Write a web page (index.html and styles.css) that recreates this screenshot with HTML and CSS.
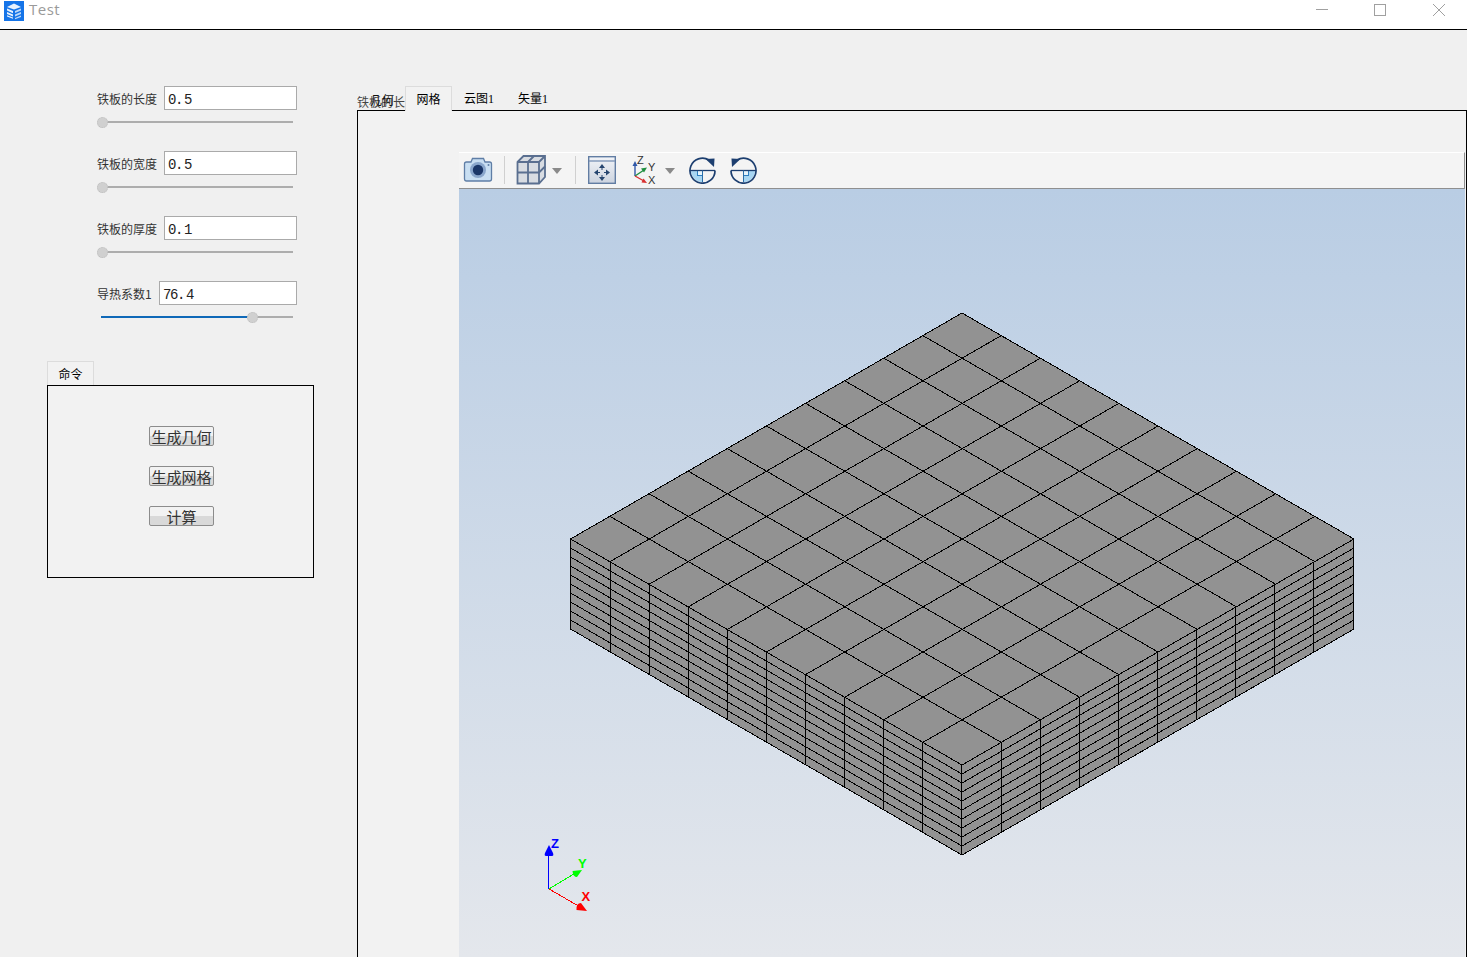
FILE: index.html
```html
<!DOCTYPE html>
<html lang="zh">
<head>
<meta charset="utf-8">
<title>Test</title>
<link rel="stylesheet" href="styles.css">
</head>
<body>
<div class="window">
  <header class="titlebar">
    <svg class="app-icon" viewBox="0 0 20 20" width="20" height="20">
      <rect width="20" height="20" fill="#1574e8"/>
      <path d="M3 6 10 2.500 17 6 10 8.500Z" fill="#e8f2fd"/>
      <path d="M3 7.500 9 10v2.200L3 9.600ZM3 11l6 2.400v2.200L3 13ZM3 14.200l6 2.400v1.200L3 15.400Z" fill="#e8f2fd"/>
      <path d="M11 10l6-2.500v2L11 12ZM11 13.500l6-2.500v2l-6 2.500ZM11 17l6-2.500v1.400L11 18.200Z" fill="#bcd8f8"/>
    </svg>
    <span class="app-title">Test</span>
    <div class="win-controls">
      <svg class="win-btn" viewBox="0 0 12 12" width="12" height="12"><path d="M0 5.500H12" stroke="#a0a0a0" fill="none"/></svg>
      <svg class="win-btn win-btn-max" viewBox="0 0 12 12" width="12" height="12"><rect x=".5" y=".5" width="11" height="11" stroke="#a0a0a0" fill="none"/></svg>
      <svg class="win-btn" viewBox="0 0 12 12" width="12" height="12"><path d="M0 0 12 12M12 0 0 12" stroke="#a0a0a0" fill="none"/></svg>
    </div>
  </header>
  <main class="content">
    <aside class="left">
      <div class="params">
        <div class="param">
          <div class="param-row"><label class="param-label">铁板的长度</label><input class="param-input" value="0. 5"></div>
          <div class="slider"><span class="knob knob-start"></span></div>
        </div>
        <div class="param">
          <div class="param-row"><label class="param-label">铁板的宽度</label><input class="param-input" value="0. 5"></div>
          <div class="slider"><span class="knob knob-start"></span></div>
        </div>
        <div class="param">
          <div class="param-row"><label class="param-label">铁板的厚度</label><input class="param-input" value="0. 1"></div>
          <div class="slider"><span class="knob knob-start"></span></div>
        </div>
        <div class="param">
          <div class="param-row param-row-wide"><label class="param-label">导热系数1</label><input class="param-input param-input-wide" value="76. 4"></div>
          <div class="slider slider-filled"><span class="fill"></span><span class="knob knob-end"></span></div>
        </div>
      </div>
      <section class="commands">
        <div class="tab tab-cmd">命令</div>
        <div class="cmd-panel">
          <button class="cmd-btn">生成几何</button>
          <button class="cmd-btn">生成网格</button>
          <button class="cmd-btn">计算</button>
        </div>
      </section>
    </aside>
    <section class="right">
      <div class="tabs">
        <span class="tab-under">铁板的长</span>
        <span class="tab-over">几何</span>
        <span class="tab tab-active">网格</span>
        <span class="tab-plain tab-cloud">云图1</span>
        <span class="tab-plain">矢量1</span>
      </div>
      <div class="tab-panel">
        <div class="viewer">
          <div class="toolbar">
            <svg class="tool tool-cam" width="30" height="26" viewBox="0 0 30 26">
              <path d="M3.500 5H8l1.500-3.500h11L22 5h4.500q2 0 2 2v15q0 2-2 2h-23q-2 0-2-2V7q0-2 2-2Z" fill="#c9dff2" stroke="#5f7ea6" stroke-width="1.300"/>
              <circle cx="15" cy="13" r="8" fill="#8aa7cc"/>
              <circle cx="15" cy="13" r="5.200" fill="#1b3768"/>
              <circle cx="25.500" cy="8" r="1" fill="#5f7ea6"/>
            </svg>
            <span class="sep"></span>
            <svg class="tool tool-cube" width="30" height="30" viewBox="0 0 30 30">
              <path d="M1.500 7 7.500 1H29V22l-6 6.500H1.500Z" fill="#d8dce2"/>
              <path d="M1.500 7 7.500 1H29V22l-6 6.500H1.500ZM1.500 7H23V28.500M23 7 29 1" fill="none" stroke="#5a6f90" stroke-width="1.800"/>
              <path d="M12 7V28.500M1.500 17.500H23M23 17.500 29 11.500M12 7 18 1" fill="none" stroke="#5a6f90" stroke-width="1.800"/>
            </svg>
            <svg class="tool tool-caret" width="10" height="6" viewBox="0 0 10 6"><path d="M0 0H10L5 6Z" fill="#8a8a8a"/></svg>
            <span class="sep sep-2"></span>
            <svg class="tool tool-fit" width="28" height="28" viewBox="0 0 28 28">
              <defs><linearGradient id="fitbg" x1="0" y1="0" x2="0" y2="1"><stop offset="0" stop-color="#f2f4f8"/><stop offset="1" stop-color="#ccd3df"/></linearGradient></defs>
              <rect x=".7" y=".7" width="26.600" height="26.600" fill="url(#fitbg)" stroke="#627da3" stroke-width="1.400"/>
              <path d="M1 5H27" stroke="#7f96b8" stroke-width="1.400"/>
              <path d="M14 8 11 12h6ZM14 25 11 21h6ZM6 16.500l4-3v6ZM22 16.500l-4-3v6Z" fill="#26456f"/>
              <path d="M14 12v2M14 19v2M10 16.500h2M16 16.500h2" stroke="#26456f"/>
            </svg>
            <svg class="tool tool-axes" width="30" height="32" viewBox="0 0 30 32">
              <path d="M4 22V10" stroke="#3158a8" stroke-width="1.400"/>
              <path d="M4 7 1.500 12h5Z" fill="#3158a8"/>
              <path d="M4 22 13 16" stroke="#1f8f3f" stroke-width="1.400"/>
              <path d="M16 13.500 10 14.500 13 18.500Z" fill="#1f8f3f"/>
              <path d="M4 22 13 27" stroke="#d83030" stroke-width="1.400"/>
              <path d="M16 29 10.500 28.500 12.500 24.500Z" fill="#d83030"/>
              <text class="axis-label" x="6" y="9.500">Z</text>
              <text class="axis-label" x="17" y="17">Y</text>
              <text class="axis-label" x="17" y="30">X</text>
            </svg>
            <svg class="tool tool-caret tool-caret-2" width="10" height="6" viewBox="0 0 10 6"><path d="M0 0H10L5 6Z" fill="#8a8a8a"/></svg>
            <svg class="tool tool-rot" width="27" height="27" viewBox="0 0 27 27">
              <path d="M13.500 13.500H2A11.500 11.500 0 0 0 13.500 25Z" fill="#a8d6f2"/>
              <rect x="8.500" y="13.500" width="5" height="5" fill="#e6f4fc" stroke="#2f7fc0"/>
              <path d="M1 13.500H26" stroke="#1d3f70" stroke-width="1.300"/>
              <path d="M13.500 13.500V25" stroke="#2b6ea8"/>
              <path d="M20 3A12.500 12.500 0 1 0 26 13.500" fill="none" stroke="#1d3f70" stroke-width="1.700"/>
              <path d="M16.500 2 25.500 1.500 25 10Z" fill="#1d3f70"/>
            </svg>
            <svg class="tool tool-rot tool-rot-2" width="27" height="27" viewBox="0 0 27 27">
              <path d="M13.500 13.500H25A11.500 11.500 0 0 1 13.500 25Z" fill="#a8d6f2"/>
              <rect x="13.500" y="13.500" width="5" height="5" fill="#e6f4fc" stroke="#2f7fc0"/>
              <path d="M1 13.500H26" stroke="#1d3f70" stroke-width="1.300"/>
              <path d="M13.500 13.500V25" stroke="#2b6ea8"/>
              <path d="M7 3A12.500 12.500 0 1 1 1 13.500" fill="none" stroke="#1d3f70" stroke-width="1.700"/>
              <path d="M10.500 2 1.500 1.500 2 10Z" fill="#1d3f70"/>
            </svg>
          </div>
          <div class="scene">
            <svg class="mesh" viewBox="459 189 1006 768" width="1006" height="768">
              <path d="M962 313 1354 539V629L962 855 570.500 629V539Z" fill="#929292" stroke="none"/>
              <path class="mesh-lines" d="M570.500 539 962 765M610.100 516.400 1001.200 742.400M649.200 493.800 1040.400 719.800M688.300 471.200 1079.600 697.200M727.400 448.600 1118.800 674.600M766.500 426 1158 652M805.600 403.400 1197.200 629.400M844.700 380.800 1236.400 606.800M883.800 358.200 1275.600 584.200M922.900 335.600 1314.800 561.600M962 313 1354 539M570.500 539 962 313M610.100 561.600 1001.200 335.600M649.200 584.200 1040.400 358.200M688.300 606.800 1079.600 380.800M727.400 629.400 1118.800 403.400M766.500 652 1158 426M805.600 674.600 1197.200 448.600M844.700 697.200 1236.400 471.200M883.800 719.800 1275.600 493.800M922.900 742.400 1314.800 516.400M962 765 1354 539"/>
              <path class="mesh-lines" d="M570.500 548 962 774 1354 548M570.500 557 962 783 1354 557M570.500 566 962 792 1354 566M570.500 575 962 801 1354 575M570.500 584 962 810 1354 584M570.500 593 962 819 1354 593M570.500 602 962 828 1354 602M570.500 611 962 837 1354 611M570.500 620 962 846 1354 620M570.500 629 962 855 1354 629"/>
              <path class="mesh-lines" d="M570.500 539v90M610.500 561.600v90M649.500 584.200v90M688.500 606.800v90M727.500 629.400v90M766.500 652v90M805.500 674.600v90M844.500 697.200v90M883.500 719.800v90M922.500 742.400v90M961.500 765v90M1001.500 742.400v90M1040.500 719.800v90M1079.500 697.200v90M1118.500 674.600v90M1157.500 652v90M1196.500 629.400v90M1235.500 606.800v90M1274.500 584.200v90M1313.500 561.600v90M1353.500 539v90"/>
              <path d="M548.500 889V852" stroke="#0000ff" fill="none"/>
              <path d="M549 889 577 872" stroke="#00ff00" fill="none" shape-rendering="crispEdges"/>
              <path d="M549 889 582 908" stroke="#ff0000" fill="none" shape-rendering="crispEdges"/>
              <path d="M549 845l4 8q1 3-1 3h-6q-2 0-1-3Z" fill="#0000ff"/>
              <path d="M572.500 871 582 870 577 877Q573 877 572.500 871Z" fill="#00ff00"/>
              <path d="M576.500 910Q576 903 581 903L587 911Z" fill="#ff0000"/>
              <text class="gizmo-label gizmo-z" x="551" y="848">Z</text>
              <text class="gizmo-label gizmo-y" x="578" y="868">Y</text>
              <text class="gizmo-label gizmo-x" x="581.500" y="901">X</text>
            </svg>
          </div>
        </div>
      </div>
    </section>
  </main>
</div>
</body>
</html>
```

FILE: styles.css
```css
* { box-sizing: border-box; }
html, body { margin: 0; padding: 0; height: 100%; overflow: hidden; }
body { font-family: "Noto Sans CJK SC", "Liberation Sans", sans-serif; background: #f0f0f0; color: #000; }
.window { width: 1467px; height: 957px; display: flex; flex-direction: column; overflow: hidden; }

.titlebar { height: 30px; flex: none; background: #fff; border-bottom: 1px solid #000; display: flex; align-items: flex-start; padding: 1px 0 0 4px; }
.app-icon { flex: none; }
.app-title { margin: 0 0 0 5px; font: 15px/18px "Open Sans", "Liberation Sans", sans-serif; color: #9a9a9a; letter-spacing: .5px; transform: translateY(-1px); }
.win-controls { margin-left: auto; display: flex; gap: 46px; padding: 3px 22px 0 0; }
.win-btn { display: block; }
.win-btn-max { margin-right: 1px; }

.content { flex: 1; display: flex; min-height: 0; background: #f0f0f0; }
.left { width: 357px; flex: none; padding: 56px 0 0 47px; }
.params { display: flex; flex-direction: column; gap: 19px; padding-left: 50px; width: 250px; }
.param { height: 46px; display: flex; flex-direction: column; }
.param-row { display: flex; align-items: center; height: 24px; gap: 6px; }
.param-label { font-size: 12px; line-height: 24px; padding-top: 2px; color: #333; white-space: nowrap; width: 61px; }
.param-row-wide .param-label { width: 56px; }
.param-input { width: 133px; height: 24px; border: 1px solid #aaa; background: #fff; padding: 4px 3px 0; font: 14px/18px "Liberation Mono", monospace; letter-spacing: -1.400px; word-spacing: -5px; color: #222; outline: none; margin: 0; border-radius: 0; }
.param-input-wide { width: 138px; }
.slider { position: relative; width: 192px; height: 2px; background: #adadad; margin: 11px 0 0 4px; }
.knob { position: absolute; top: -4px; width: 11px; height: 11px; border-radius: 50%; background: #d0d0d0; border: 1px dotted #bdbdbd; }
.knob-start { left: -4px; }
.knob-end { left: 146px; }
.fill { position: absolute; left: 0; top: 0; height: 2px; width: 150px; background: #0f69b8; }

.commands { margin-top: 34px; width: 267px; }
.tab { display: block; border: 1px solid #dcdcdc; font-size: 12px; text-align: center; }
.tab-cmd { width: 47px; height: 25px; line-height: 23px; border-bottom: none; background: #f2f2f2; }
.cmd-panel { height: 193px; border: 1px solid #000; background: #f2f2f2; margin-top: -1px; display: flex; flex-direction: column; align-items: center; gap: 20px; padding: 40px 0 0 2px; position: relative; }
.cmd-btn { width: 65px; height: 20px; padding: 1px 0 0; border: 1px solid #8c8c8c; border-radius: 2px; background: linear-gradient(#f2f2f2 50%, #d9d9d9 50%); font: 15px/18px "Noto Sans CJK SC", sans-serif; color: #333; white-space: nowrap; overflow: visible; }

.right { flex: 1; display: flex; flex-direction: column; min-width: 0; padding-top: 56px; }
.tabs { display: flex; height: 25px; position: relative; align-items: flex-end; }
.tab-under { position: absolute; left: 0; top: 7px; font-size: 12px; line-height: 18px; color: #444; width: 48px; overflow: hidden; white-space: nowrap; }
.tab-over { position: absolute; left: 13px; top: 5px; font-size: 12px; line-height: 18px; color: #111; }
.tab-active { margin-left: 48px; width: 47px; height: 25px; line-height: 23px; border-bottom: none; background: #f2f2f2; z-index: 1; }
.tab-plain { font: 12px/23px "Liberation Serif", "Noto Sans CJK SC", serif; height: 25px; padding-top: 2px; margin-left: 24px; }
.tab-cloud { margin-left: 12px; }
.tab-panel { flex: 1; border: 1px solid #000; border-bottom: none; background: #f2f2f2; margin-top: -1px; padding: 41px 0 0 101px; min-height: 0; position: relative; z-index: 0; }
.viewer { width: 1006px; height: 100%; display: flex; flex-direction: column; }
.toolbar { height: 37px; flex: none; background: #f4f4f4; border-top: 1px solid #fff; border-bottom: 1px solid #8f8f8f; border-right: 1px solid #8f8f8f; position: relative; }
.tool { position: absolute; display: block; }
.tool-cam { left: 4px; top: 4px; }
.sep { position: absolute; left: 45px; top: 3px; width: 1px; height: 28px; background: #d0d0d0; }
.sep-2 { left: 116px; }
.tool-cube { left: 57px; top: 2px; }
.tool-caret { left: 93px; top: 15px; }
.tool-caret-2 { left: 206px; }
.tool-fit { left: 129px; top: 3px; }
.tool-axes { left: 172px; top: 1px; }
.axis-label { font: 11px "Liberation Sans", sans-serif; fill: #333; }
.tool-rot { left: 230px; top: 4px; }
.tool-rot-2 { left: 271px; }
.scene { flex: 1; min-height: 0; background: linear-gradient(#b9cde4, #e4e7ec); overflow: hidden; }
.mesh { display: block; }
.mesh-lines { fill: none; stroke: #000; stroke-width: 1; shape-rendering: crispEdges; }
.gizmo-label { font: bold 13px "Liberation Sans", sans-serif; }
.gizmo-z { fill: #0000ff; }
.gizmo-y { fill: #00ff00; }
.gizmo-x { fill: #ff0000; }
```
